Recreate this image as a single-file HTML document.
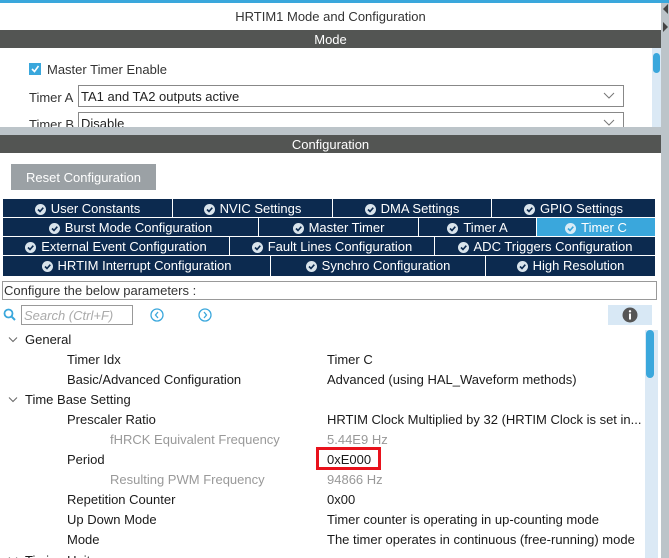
<!DOCTYPE html>
<html><head><meta charset="utf-8">
<style>
*{margin:0;padding:0;box-sizing:border-box}
html,body{width:669px;height:558px;overflow:hidden}
body{background:#fff;font-family:"Liberation Sans",sans-serif;font-size:13px;color:#1a1a1a;position:relative}
.a{position:absolute;white-space:nowrap}
.bar{position:absolute;left:0;width:661px;height:18px;background:#535553;color:#fff;text-align:center;line-height:19px;font-size:13px}
.tab{position:absolute;height:18px;background:#0c2a4f;color:#fff;line-height:19px;text-align:center;font-size:13px;border-right:1px solid #fff}
.tab svg{vertical-align:-2px;margin-right:5px}
.act{background:#3aa7dc}
.sel{position:absolute;border:1px solid #888;background:#fff;height:22px;line-height:21px;padding-left:2px;color:#222}
.chev{position:absolute;right:8px;top:6px}
.r{position:absolute;height:20px;line-height:22px;white-space:nowrap}
.g{color:#999}
</style></head><body>
<div class="a" style="left:0;top:0;width:669px;height:3px;background:#3aa7dc"></div>
<div class="a" style="left:661px;top:3px;width:8px;height:555px;background:#bcc4c9"></div>
<svg class="a" style="left:662px;top:4px" width="7" height="30"><path d="M6 0 L1 5 L6 10Z" fill="#444"/><path d="M1 18 L6 23 L1 28Z" fill="#444"/></svg>
<div class="a" style="left:0;top:9px;width:661px;text-align:center;color:#333">HRTIM1 Mode and Configuration</div>
<div class="bar" style="top:30px">Mode</div>
<div class="a" style="left:652px;top:48px;width:9px;height:79px;background:#dbe9f5"></div>
<div class="a" style="left:653px;top:53px;width:7px;height:20px;background:#3aa7dc;border-radius:4px"></div>
<div class="a" style="left:29px;top:63px;width:12px;height:12px;background:#3aa7dc"></div>
<svg class="a" style="left:30px;top:64px" width="10" height="10"><path d="M2 5 L4.5 7.5 L8.5 2" stroke="#fff" stroke-width="1.6" fill="none"/></svg>
<div class="a" style="left:47px;top:62px;color:#333">Master Timer Enable</div>
<div class="a" style="left:29px;top:90px;color:#333">Timer A</div>
<div class="sel" style="left:78px;top:85px;width:546px">TA1 and TA2 outputs active<svg class="chev" width="12" height="8"><path d="M1 1 L6 6 L11 1" stroke="#777" fill="none"/></svg></div>
<div class="a" style="left:29px;top:117px;color:#333">Timer B</div>
<div class="sel" style="left:78px;top:112px;width:546px">Disable<svg class="chev" width="12" height="8"><path d="M1 1 L6 6 L11 1" stroke="#777" fill="none"/></svg></div>
<div class="a" style="left:0;top:127px;width:661px;height:8px;background:#bcc4c9"></div>
<div class="bar" style="top:135px">Configuration</div>
<div class="a" style="left:0;top:153px;width:661px;height:405px;background:#fff"></div>
<div class="a" style="left:11px;top:164px;width:145px;height:26px;background:#9ba1a5;color:#fff;line-height:27px;text-align:center">Reset Configuration</div>

<div class="tab" style="left:3px;top:199px;width:170px"><svg width="11" height="11"><circle cx="5.5" cy="5.5" r="5.5" fill="#d9e4ec"/><path d="M3 5.5 L5 7.5 L8.3 3.7" stroke="#0c2a4f" stroke-width="1.6" fill="none"/></svg>User Constants</div>
<div class="tab" style="left:173px;top:199px;width:160px"><svg width="11" height="11"><circle cx="5.5" cy="5.5" r="5.5" fill="#d9e4ec"/><path d="M3 5.5 L5 7.5 L8.3 3.7" stroke="#0c2a4f" stroke-width="1.6" fill="none"/></svg>NVIC Settings</div>
<div class="tab" style="left:333px;top:199px;width:159px"><svg width="11" height="11"><circle cx="5.5" cy="5.5" r="5.5" fill="#d9e4ec"/><path d="M3 5.5 L5 7.5 L8.3 3.7" stroke="#0c2a4f" stroke-width="1.6" fill="none"/></svg>DMA Settings</div>
<div class="tab" style="left:492px;top:199px;width:163px;border-right:none"><svg width="11" height="11"><circle cx="5.5" cy="5.5" r="5.5" fill="#d9e4ec"/><path d="M3 5.5 L5 7.5 L8.3 3.7" stroke="#0c2a4f" stroke-width="1.6" fill="none"/></svg>GPIO Settings</div>

<div class="tab" style="left:3px;top:218px;width:256px"><svg width="11" height="11"><circle cx="5.5" cy="5.5" r="5.5" fill="#d9e4ec"/><path d="M3 5.5 L5 7.5 L8.3 3.7" stroke="#0c2a4f" stroke-width="1.6" fill="none"/></svg>Burst Mode Configuration</div>
<div class="tab" style="left:259px;top:218px;width:160px"><svg width="11" height="11"><circle cx="5.5" cy="5.5" r="5.5" fill="#d9e4ec"/><path d="M3 5.5 L5 7.5 L8.3 3.7" stroke="#0c2a4f" stroke-width="1.6" fill="none"/></svg>Master Timer</div>
<div class="tab" style="left:419px;top:218px;width:118px"><svg width="11" height="11"><circle cx="5.5" cy="5.5" r="5.5" fill="#d9e4ec"/><path d="M3 5.5 L5 7.5 L8.3 3.7" stroke="#0c2a4f" stroke-width="1.6" fill="none"/></svg>Timer A</div>
<div class="tab act" style="left:537px;top:218px;width:118px;border-right:none"><svg width="11" height="11"><circle cx="5.5" cy="5.5" r="5.5" fill="#d9ecf6"/><path d="M3 5.5 L5 7.5 L8.3 3.7" stroke="#3aa7dc" stroke-width="1.6" fill="none"/></svg>Timer C</div>

<div class="tab" style="left:3px;top:237px;width:227px"><svg width="11" height="11"><circle cx="5.5" cy="5.5" r="5.5" fill="#d9e4ec"/><path d="M3 5.5 L5 7.5 L8.3 3.7" stroke="#0c2a4f" stroke-width="1.6" fill="none"/></svg>External Event Configuration</div>
<div class="tab" style="left:230px;top:237px;width:205px"><svg width="11" height="11"><circle cx="5.5" cy="5.5" r="5.5" fill="#d9e4ec"/><path d="M3 5.5 L5 7.5 L8.3 3.7" stroke="#0c2a4f" stroke-width="1.6" fill="none"/></svg>Fault Lines Configuration</div>
<div class="tab" style="left:435px;top:237px;width:220px;border-right:none"><svg width="11" height="11"><circle cx="5.5" cy="5.5" r="5.5" fill="#d9e4ec"/><path d="M3 5.5 L5 7.5 L8.3 3.7" stroke="#0c2a4f" stroke-width="1.6" fill="none"/></svg>ADC Triggers Configuration</div>

<div class="tab" style="left:3px;top:256px;width:268px;height:20px;line-height:20px"><svg width="11" height="11"><circle cx="5.5" cy="5.5" r="5.5" fill="#d9e4ec"/><path d="M3 5.5 L5 7.5 L8.3 3.7" stroke="#0c2a4f" stroke-width="1.6" fill="none"/></svg>HRTIM Interrupt Configuration</div>
<div class="tab" style="left:271px;top:256px;width:215px;height:20px;line-height:20px"><svg width="11" height="11"><circle cx="5.5" cy="5.5" r="5.5" fill="#d9e4ec"/><path d="M3 5.5 L5 7.5 L8.3 3.7" stroke="#0c2a4f" stroke-width="1.6" fill="none"/></svg>Synchro Configuration</div>
<div class="tab" style="left:486px;top:256px;width:169px;height:20px;line-height:20px;border-right:none"><svg width="11" height="11"><circle cx="5.5" cy="5.5" r="5.5" fill="#d9e4ec"/><path d="M3 5.5 L5 7.5 L8.3 3.7" stroke="#0c2a4f" stroke-width="1.6" fill="none"/></svg>High Resolution</div>

<div class="a" style="left:2px;top:281px;width:655px;height:19px;border:1px solid #999;line-height:18px;padding-left:1px;color:#333">Configure the below parameters :</div>
<svg class="a" style="left:3px;top:308px" width="13" height="14"><circle cx="5.5" cy="5.5" r="4" stroke="#3aa7dc" stroke-width="1.8" fill="none"/><path d="M8.5 8.5 L12 12" stroke="#3aa7dc" stroke-width="2"/></svg>
<div class="a" style="left:21px;top:305px;width:112px;height:20px;border:1px solid #999;line-height:19px;padding-left:2px;color:#aaa;font-style:italic">Search (Ctrl+F)</div>
<svg class="a" style="left:150px;top:308px" width="14" height="14"><circle cx="7" cy="7" r="6" stroke="#3aa7dc" stroke-width="1.3" fill="none"/><path d="M8 4 L5.5 7 L8 10" stroke="#3aa7dc" stroke-width="1.3" fill="none"/></svg>
<svg class="a" style="left:198px;top:308px" width="14" height="14"><circle cx="7" cy="7" r="6" stroke="#3aa7dc" stroke-width="1.3" fill="none"/><path d="M6 4 L8.5 7 L6 10" stroke="#3aa7dc" stroke-width="1.3" fill="none"/></svg>
<div class="a" style="left:608px;top:305px;width:44px;height:20px;background:#d8e8f5"></div>
<svg class="a" style="left:622px;top:307px" width="16" height="16"><circle cx="8" cy="8" r="7.5" fill="#555"/><rect x="7" y="6.5" width="2" height="6" fill="#fff"/><circle cx="8" cy="4.3" r="1.2" fill="#fff"/></svg>

<div class="a" style="left:645px;top:330px;width:13px;height:228px;background:#dbe9f5"></div>
<div class="a" style="left:646px;top:330px;width:8px;height:48px;background:#3aa7dc;border-radius:4px"></div>

<svg class="a" style="left:8px;top:336px" width="10" height="8"><path d="M1 1.5 L5 5.5 L9 1.5" stroke="#666" fill="none"/></svg>
<div class="r" style="left:25px;top:329px">General</div>
<div class="r" style="left:67px;top:349px">Timer Idx</div><div class="r" style="left:327px;top:349px">Timer C</div>
<div class="r" style="left:67px;top:369px">Basic/Advanced Configuration</div><div class="r" style="left:327px;top:369px">Advanced (using HAL_Waveform methods)</div>
<svg class="a" style="left:8px;top:396px" width="10" height="8"><path d="M1 1.5 L5 5.5 L9 1.5" stroke="#666" fill="none"/></svg>
<div class="r" style="left:25px;top:389px">Time Base Setting</div>
<div class="r" style="left:67px;top:409px">Prescaler Ratio</div><div class="r" style="left:327px;top:409px">HRTIM Clock Multiplied by 32 (HRTIM Clock is set in...</div>
<div class="r g" style="left:110px;top:429px">fHRCK Equivalent Frequency</div><div class="r g" style="left:327px;top:429px">5.44E9 Hz</div>
<div class="r" style="left:67px;top:449px">Period</div><div class="r" style="left:327px;top:449px">0xE000</div>
<div class="a" style="left:316px;top:447px;width:65px;height:23px;border:3px solid #e8121c"></div>
<div class="r g" style="left:110px;top:469px">Resulting PWM Frequency</div><div class="r g" style="left:327px;top:469px">94866 Hz</div>
<div class="r" style="left:67px;top:489px">Repetition Counter</div><div class="r" style="left:327px;top:489px">0x00</div>
<div class="r" style="left:67px;top:509px">Up Down Mode</div><div class="r" style="left:327px;top:509px">Timer counter is operating in up-counting mode</div>
<div class="r" style="left:67px;top:529px">Mode</div><div class="r" style="left:327px;top:529px">The timer operates in continuous (free-running) mode</div>
<svg class="a" style="left:8px;top:556px" width="10" height="8"><path d="M1 1.5 L5 5.5 L9 1.5" stroke="#666" fill="none"/></svg>
<div class="r" style="left:25px;top:550px">Timing Unit</div>
</body></html>
